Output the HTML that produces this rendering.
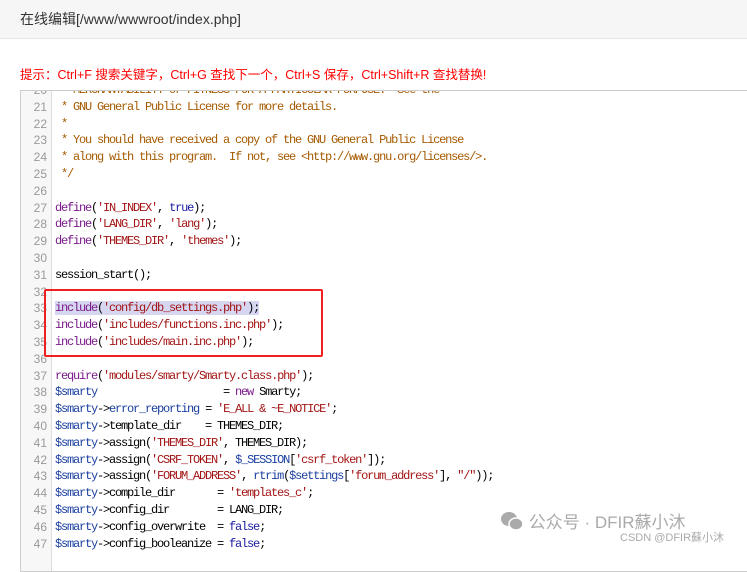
<!DOCTYPE html>
<html><head><meta charset="utf-8"><style>
body{margin:0;width:747px;height:549px;overflow:hidden;background:#fff;font-family:"Liberation Sans","Noto Sans CJK SC",sans-serif;position:relative}
.hd{position:absolute;left:0;top:0;width:747px;height:38px;background:#f6f6f6;border-bottom:1px solid #e6e6e6;font-size:14px;color:#333;line-height:38px;text-indent:20px}
.tip{position:absolute;left:20px;top:64px;font-size:12.5px;color:#f00}
.ed{position:absolute;left:20px;top:90px;width:740px;height:480px;border:1px solid #ccc;border-right:none;overflow:hidden}
.gut{position:absolute;left:0;top:0;width:30px;height:100%;background:#f7f7f7;border-right:1px solid #ddd}
.code{position:absolute;left:0;top:-9px;font-family:"Liberation Mono",monospace;font-size:12px;letter-spacing:-1.2px;line-height:16.8px;white-space:pre}
.code div{height:16.8px;overflow:visible}
.ln{display:inline-block;vertical-align:top;height:16.8px;line-height:16.8px;width:26px;text-align:right;color:#999;font-family:"Liberation Sans",sans-serif;letter-spacing:0;font-size:12px;margin-right:8px}
.c{color:#a55a00}.k{color:#7a1a8a}.s{color:#a31515}.v{color:#1a3fa0}.b{color:#1a1aa0}
.hl{background:#d6d6f0}
.box{position:absolute;left:44px;top:289px;width:275px;height:64px;border:2px solid #f02020;border-radius:2px}
.wm{position:absolute;left:500px;top:508px;font-size:17px;color:#aaa}
.wm2{position:absolute;left:620px;top:529px;font-size:11px;color:#aaa}
</style></head><body>
<div class="hd">在线编辑[/www/wwwroot/index.php]</div>
<div class="tip">提示：Ctrl+F 搜索关键字，Ctrl+G 查找下一个，Ctrl+S 保存，Ctrl+Shift+R 查找替换!</div>
<div class="ed"><div class="gut"></div><div class="code"><div><span class="ln">20</span><span class="c"> * MERCHANTABILITY or FITNESS FOR A PARTICULAR PURPOSE.  See the</span></div><div><span class="ln">21</span><span class="c"> * GNU General Public License for more details.</span></div><div><span class="ln">22</span><span class="c"> *</span></div><div><span class="ln">23</span><span class="c"> * You should have received a copy of the GNU General Public License</span></div><div><span class="ln">24</span><span class="c"> * along with this program.  If not, see &lt;http://www.gnu.org/licenses/&gt;.</span></div><div><span class="ln">25</span><span class="c"> */</span></div><div><span class="ln">26</span></div><div><span class="ln">27</span><span class="k">define</span>(<span class="s">'IN_INDEX'</span>, <span class="b">true</span>);</div><div><span class="ln">28</span><span class="k">define</span>(<span class="s">'LANG_DIR'</span>, <span class="s">'lang'</span>);</div><div><span class="ln">29</span><span class="k">define</span>(<span class="s">'THEMES_DIR'</span>, <span class="s">'themes'</span>);</div><div><span class="ln">30</span></div><div><span class="ln">31</span>session_start();</div><div><span class="ln">32</span></div><div><span class="ln">33</span><span class="hl"><span class="k">include</span>(<span class="s">'config/db_settings.php'</span>);</span></div><div><span class="ln">34</span><span class="k">include</span>(<span class="s">'includes/functions.inc.php'</span>);</div><div><span class="ln">35</span><span class="k">include</span>(<span class="s">'includes/main.inc.php'</span>);</div><div><span class="ln">36</span></div><div><span class="ln">37</span><span class="k">require</span>(<span class="s">'modules/smarty/Smarty.class.php'</span>);</div><div><span class="ln">38</span><span class="v">$smarty</span>                     = <span class="k">new</span> Smarty;</div><div><span class="ln">39</span><span class="v">$smarty</span>-&gt;<span class="v">error_reporting</span> = <span class="s">'E_ALL &amp; ~E_NOTICE'</span>;</div><div><span class="ln">40</span><span class="v">$smarty</span>-&gt;template_dir    = THEMES_DIR;</div><div><span class="ln">41</span><span class="v">$smarty</span>-&gt;assign(<span class="s">'THEMES_DIR'</span>, THEMES_DIR);</div><div><span class="ln">42</span><span class="v">$smarty</span>-&gt;assign(<span class="s">'CSRF_TOKEN'</span>, <span class="v">$_SESSION</span>[<span class="s">'csrf_token'</span>]);</div><div><span class="ln">43</span><span class="v">$smarty</span>-&gt;assign(<span class="s">'FORUM_ADDRESS'</span>, <span class="v">rtrim</span>(<span class="v">$settings</span>[<span class="s">'forum_address'</span>], <span class="s">"/"</span>));</div><div><span class="ln">44</span><span class="v">$smarty</span>-&gt;compile_dir       = <span class="s">'templates_c'</span>;</div><div><span class="ln">45</span><span class="v">$smarty</span>-&gt;config_dir        = LANG_DIR;</div><div><span class="ln">46</span><span class="v">$smarty</span>-&gt;config_overwrite  = <span class="b">false</span>;</div><div><span class="ln">47</span><span class="v">$smarty</span>-&gt;config_booleanize = <span class="b">false</span>;</div></div></div>
<div class="box"></div>
<div class="wm"><svg width="24" height="20" viewBox="0 0 24 20" style="vertical-align:-3px"><ellipse cx="9" cy="8" rx="8" ry="7" fill="#aaa"/><ellipse cx="16" cy="13" rx="7" ry="6" fill="#aaa" stroke="#fff" stroke-width="1.5"/></svg> 公众号 · DFIR蘇小沐</div>
<div class="wm2">CSDN @DFIR蘇小沐</div>
</body></html>
